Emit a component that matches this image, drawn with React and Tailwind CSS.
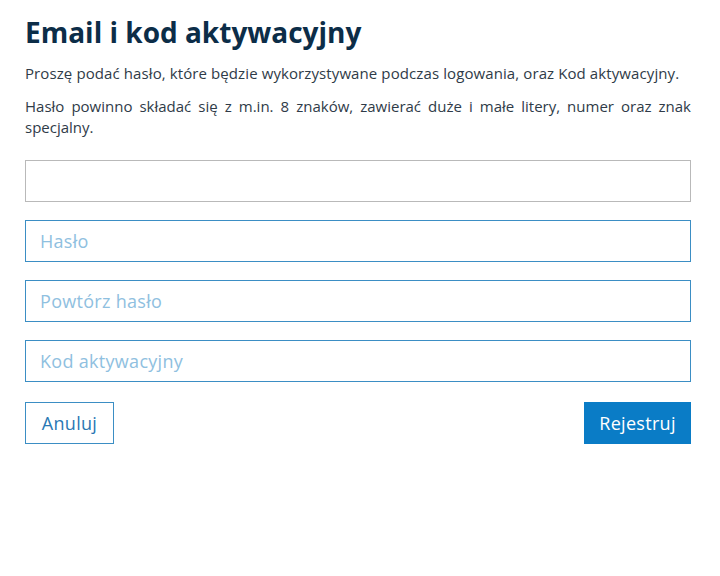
export default function App() {
  const fields = ["Hasło", "Powtórz hasło", "Kod aktywacyjny"];

  return (
    <div className="min-h-screen bg-white pl-[25px] pr-[29px] pt-[13px] font-['Open_Sans',sans-serif]">
      <h1 className="text-[28px] leading-[38px] font-bold text-[#0c2d48]">Email i kod aktywacyjny</h1>

      <p className="mt-[12px] text-[15px] leading-[21px] tracking-[0.1px] text-[#2f3b48]">
        Proszę podać hasło, które będzie wykorzystywane podczas logowania, oraz Kod aktywacyjny.
      </p>
      <p className="mt-[12px] text-[15px] leading-[21px] text-[#2f3b48] text-justify">
        Hasło powinno składać się z m.in. 8 znaków, zawierać duże i małe litery, numer oraz znak specjalny.
      </p>

      <div className="mt-[22px] flex flex-col gap-[18px]">
        <input
          type="text"
          className="h-[42px] w-full border border-[#b9b9b9] bg-white px-[14px] text-[18px] outline-none"
        />
        {fields.map((f) => (
          <input
            key={f}
            type="text"
            placeholder={f}
            className="h-[42px] w-full border border-[#3b8ec4] bg-white px-[14px] text-[18px] tracking-[0.3px] text-[#2f3b48] outline-none placeholder:text-[#8fc0e0]"
          />
        ))}
      </div>

      <div className="mt-[20px] flex items-center justify-between">
        <button className="h-[42px] w-[89px] border border-[#3b8ec4] bg-white text-[18px] tracking-[0.3px] text-[#2a78b4]">
          Anuluj
        </button>
        <button className="h-[42px] w-[107px] bg-[#0a7cc6] text-[18px] tracking-[0.3px] text-white">
          Rejestruj
        </button>
      </div>
    </div>
  );
}
